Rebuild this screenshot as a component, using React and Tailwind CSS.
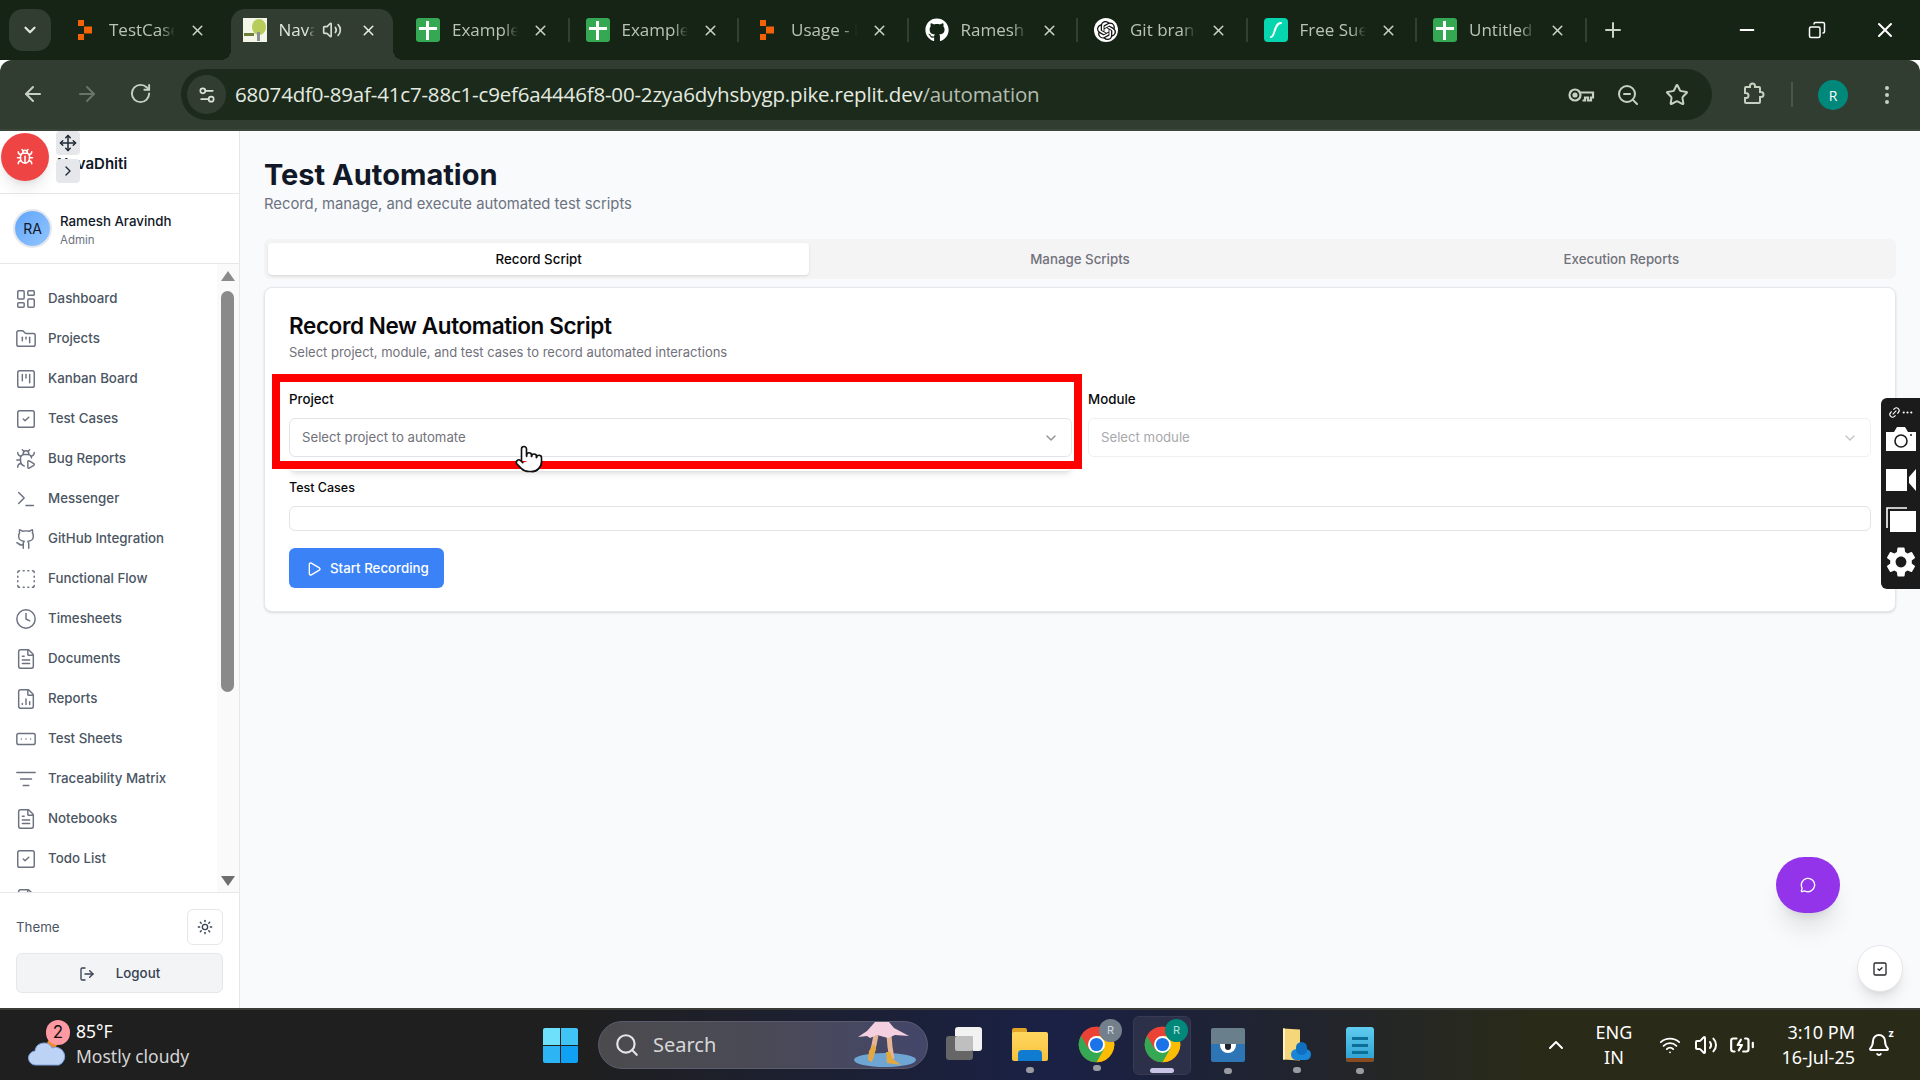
import React from "react";
import {
  ArrowLeft, ArrowRight, RotateCw, Settings2, ZoomOut, Star, EllipsisVertical, Minus, Copy, X, Plus,
  ChevronDown, ChevronRight, ChevronUp, Move, Bug, LayoutDashboard, FolderKanban, SquareKanban, SquareCheck, BugPlay,
  Terminal, Github, SquareDashed, Clock, FileText, FileChartColumn, RectangleEllipsis, ListFilter, Sun, LogOut, Play,
  MessageCircle, Pointer, Volume2, Search, Wifi, BatteryCharging, Bell, Link2, Ellipsis,
} from "lucide-react";
import { FaGithub } from "react-icons/fa";
import { SiOpenai } from "react-icons/si";
import { MdSettings } from "react-icons/md";

const SheetIcon = () => (
  <div className="w-6 h-6 rounded-[3px] bg-[#34a853] relative shrink-0">
    <div className="absolute left-[10px] top-[3px] w-[3px] h-[19px] bg-white" />
    <div className="absolute left-[3px] top-[9px] w-[18px] h-[3px] bg-white" />
  </div>
);

const ReplitIcon = () => (
  <svg width="24" height="24" viewBox="0 0 24 24" className="shrink-0">
    <rect x="5" y="2" width="6" height="6" fill="#f26207" />
    <rect x="11" y="8.5" width="8" height="7" fill="#f26207" />
    <rect x="5" y="16" width="6" height="6" fill="#f26207" />
  </svg>
);

const NavaIcon = () => (
  <svg width="24" height="24" viewBox="0 0 24 24" className="shrink-0">
    <rect width="24" height="24" fill="#f4f6e8" />
    <ellipse cx="16" cy="9" rx="7" ry="8" fill="#b8cc5c" />
    <rect x="14" y="14" width="3" height="9" fill="#8a8f98" />
    <rect x="1" y="15" width="10" height="3" fill="#6d7d3a" />
  </svg>
);

const FreeIcon = () => (
  <svg width="24" height="24" viewBox="0 0 24 24" className="shrink-0">
    <rect width="24" height="24" rx="4" fill="#06d6b0" />
    <path d="M7 19c4 0 3-14 10-14" fill="none" stroke="#fff" strokeWidth="2" strokeLinecap="round" />
  </svg>
);

const tabs = [
  { title: "TestCases", icon: <ReplitIcon />, first: true },
  { title: "NavaDhiti", icon: <NavaIcon />, active: true },
  { title: "Example", icon: <SheetIcon /> },
  { title: "Example", icon: <SheetIcon /> },
  { title: "Usage - Replit", icon: <ReplitIcon /> },
  { title: "Ramesh", icon: <FaGithub size={24} color="#fff" className="shrink-0" /> },
  { title: "Git branch", icon: <div className="w-6 h-6 rounded-full bg-white flex items-center justify-center shrink-0"><SiOpenai size={19} color="#111" /></div> },
  { title: "Free Sue", icon: <FreeIcon /> },
  { title: "Untitled", icon: <SheetIcon /> },
];

const Tab = ({ tab, showDivider }) => (
  <div className="relative w-[169.5px] h-[51px] shrink-0 flex items-center">
    {tab.active && (
      <>
        <div className="absolute left-0 right-[7px] top-0 bottom-0 rounded-t-[14px] bg-[#303d30]" />
        <div className="absolute -left-[10px] bottom-0 w-[10px] h-[10px] bg-[radial-gradient(circle_at_0_0,transparent_10px,#303d30_10px)]" />
        <div className="absolute right-[-3px] bottom-0 w-[10px] h-[10px] bg-[radial-gradient(circle_at_100%_0,transparent_10px,#303d30_10px)]" />
      </>
    )}
    <div className={`relative flex items-center w-full pb-[9px] ${tab.active || tab.first ? "pl-[12px]" : "pl-[16px]"}`}>
      {tab.icon}
      <span className={`ml-[12px] overflow-hidden whitespace-nowrap text-[17px] [mask-image:linear-gradient(to_right,black_78%,transparent)] ${tab.active ? "w-[36px] text-[#dfe6db]" : "w-[66px] text-[#b9c4b5]"}`}>
        {tab.title}
      </span>
      {tab.active && <Volume2 size={20} className="ml-[7px] text-[#d5ddd1]" />}
      <X size={17} strokeWidth={2.2} className={`${tab.active ? "ml-[18px] text-[#e8ede5]" : "ml-[14px] text-[#c9d2c5]"}`} />
    </div>
    {showDivider && <div className="absolute right-0 top-[9px] w-[2px] h-[24px] bg-[#333f32]" />}
  </div>
);

const TabStrip = () => (
  <div className="h-[60px] bg-[#162416] flex items-start pt-[9px] pl-[9px] shrink-0">
    <div className="w-[42px] h-[42px] rounded-[14px] bg-[#303d30] flex items-center justify-center mr-[10px] shrink-0">
      <ChevronDown size={18} strokeWidth={3} className="text-[#e0e6dc]" />
    </div>
    {tabs.map((tab, i) => (
      <Tab key={i} tab={tab} showDivider={i > 1} />
    ))}
    <Plus size={24} className="ml-[14px] mt-[9px] text-[#c9d2c5] shrink-0" />
    <Minus size={22} className="ml-[111px] mt-[10px] text-white shrink-0" />
    <Copy size={18} className="ml-[50px] mt-[12px] text-white shrink-0 scale-x-[-1]" />
    <X size={24} className="ml-[47px] mt-[9px] text-white shrink-0" />
  </div>
);

const KeyIcon = () => (
  <svg width="28" height="24" viewBox="0 0 28 24" fill="none" stroke="currentColor" strokeWidth="2.2" className="text-[#c6d1c2] shrink-0">
    <circle cx="8" cy="12" r="5.5" />
    <circle cx="8" cy="12" r="1.5" fill="currentColor" />
    <path d="M13.5 9.5H26v5h-2v3h-3v-3h-3v3h-2.5" />
  </svg>
);

const ExtensionIcon = () => (
  <svg width="26" height="26" viewBox="0 0 26 26" fill="none" stroke="currentColor" strokeWidth="2" className="text-[#c6d1c2] shrink-0">
    <path d="M7 6h4V5a2.5 2.5 0 0 1 5 0v1h4a1 1 0 0 1 1 1v4h1a2.5 2.5 0 0 1 0 5h-1v5a1 1 0 0 1-1 1H7a1 1 0 0 1-1-1v-4h1a2.5 2.5 0 0 0 0-5H6V7a1 1 0 0 1 1-1z" />
  </svg>
);

const Toolbar = () => (
  <div className="h-[71px] bg-[#303d30] rounded-t-[12px] border-b-2 border-[#3b463a] flex items-start pt-[9px] shrink-0">
    <ArrowLeft size={24} className="ml-[21px] mt-[13px] text-[#c6d1c2]" />
    <ArrowRight size={24} className="ml-[30px] mt-[13px] text-[#697566]" />
    <RotateCw size={23} className="ml-[30px] mt-[13px] text-[#c6d1c2]" />
    <div className="ml-[29px] w-[1531px] h-[51px] rounded-full bg-[#1c2a1b] flex items-center pl-[6px]">
      <div className="w-[39px] h-[39px] rounded-full bg-[#303d30] flex items-center justify-center shrink-0">
        <Settings2 size={20} className="text-[#dbe3d7]" />
      </div>
      <span className="ml-[9px] w-[1332px] shrink-0 text-[20.5px] text-[#e4ebe0] whitespace-nowrap tracking-[-0.18px]">
        68074df0-89af-41c7-88c1-c9ef6a4446f8-00-2zya6dyhsbygp.pike.replit.dev<span className="text-[#b3bdaf]">/automation</span>
      </span>
      <KeyIcon />
      <ZoomOut size={24} className="ml-[21px] text-[#c6d1c2] shrink-0" />
      <Star size={24} className="ml-[25px] text-[#c6d1c2] shrink-0" />
    </div>
    <div className="ml-[27px] mt-[12px]"><ExtensionIcon /></div>
    <div className="ml-[26px] mt-[13px] w-[2px] h-[25px] bg-[#4a5648]" />
    <div className="ml-[25px] mt-[11px] w-[30px] h-[30px] rounded-full bg-[#00897b] flex items-center justify-center text-[14px] text-white">R</div>
    <EllipsisVertical size={24} className="ml-[27px] mt-[14px] text-[#c6d1c2]" />
  </div>
);

const navItems = [
  ["Dashboard", LayoutDashboard], ["Projects", FolderKanban], ["Kanban Board", SquareKanban], ["Test Cases", SquareCheck],
  ["Bug Reports", BugPlay], ["Messenger", Terminal], ["GitHub Integration", Github], ["Functional Flow", SquareDashed],
  ["Timesheets", Clock], ["Documents", FileText], ["Reports", FileChartColumn], ["Test Sheets", RectangleEllipsis],
  ["Traceability Matrix", ListFilter], ["Notebooks", FileText], ["Todo List", SquareCheck], ["Settings", FileText],
];

const Sidebar = () => (
  <aside className="w-[240px] h-full shrink-0 bg-white border-r border-[#e5e7eb] flex flex-col">
    <div className="h-[63px] shrink-0 border-b border-[#e5e7eb] flex items-center pl-[57px] pt-[4px] text-[15px] font-semibold text-[#111827]">
      NavaDhiti
    </div>
    <div className="h-[70px] shrink-0 border-b border-[#e5e7eb] flex items-center pl-[15px]">
      <div className="w-[35px] h-[35px] rounded-full bg-gradient-to-br from-[#60a5fa] to-[#93c5fd] ring-2 ring-[#e5e7eb] flex items-center justify-center text-[14px] text-[#111827]">RA</div>
      <div className="ml-[10px] pt-[2px]">
        <div className="text-[13.3px] leading-[20px] font-medium text-[#111827]">Ramesh Aravindh</div>
        <div className="text-[11.5px] leading-[16px] text-[#6b7280] mt-[1px]">Admin</div>
      </div>
    </div>
    <div className="flex-1 min-h-0 flex">
      <nav className="flex-1 overflow-hidden pt-[15px] pl-[15px]">
        {navItems.map(([label, Icon]) => (
          <div key={label} className="h-10 flex items-center text-[13.3px] font-medium text-[#4b5563]">
            <Icon size={22} strokeWidth={1.6} className="text-[#6b7280] shrink-0" />
            <span className="ml-[11px]">{label}</span>
          </div>
        ))}
      </nav>
      <div className="w-[22px] shrink-0 bg-[#fafafa] flex flex-col items-center pr-[1px]">
        <div className="mt-[7px] w-0 h-0 border-x-[7px] border-x-transparent border-b-[10px] border-b-[#8a8a8a]" />
        <div className="mt-[10px] w-[13px] h-[401px] rounded-full bg-[#8a8a8a]" />
        <div className="mt-auto mb-[6px] w-0 h-0 border-x-[7px] border-x-transparent border-t-[10px] border-t-[#6e6e6e]" />
      </div>
    </div>
    <div className="h-[116px] shrink-0 border-t border-[#e5e7eb] px-4 pt-4">
      <div className="flex items-center justify-between">
        <span className="text-[13.3px] pt-[1px] text-[#4b5563]">Theme</span>
        <div className="w-[36px] h-[36px] rounded-md border border-[#e5e7eb] flex items-center justify-center">
          <Sun size={16} className="text-[#374151]" />
        </div>
      </div>
      <div className="mt-[8px] h-[40px] rounded-md bg-[#f3f4f6] border border-[#e5e7eb] flex items-center justify-center pt-[1px] text-[13.3px] font-medium text-[#374151]">
        <LogOut size={16} className="mr-[21px] text-[#374151]" />
        Logout
      </div>
    </div>
  </aside>
);

const Field = ({ label, placeholder, disabled, children }) => (
  <div className="relative">
    <div className="text-[13.3px] leading-[20px] font-medium text-[#09090b]">{label}</div>
    <div className={`mt-[9px] h-[39px] rounded-md border bg-white flex items-center justify-between pl-[12px] pr-[12px] pt-[1px] text-[13.2px] ${disabled ? "border-[#f0f0f0] text-[#a8a8ad]" : "border-[#e4e4e7] text-[#71717a]"}`}>
      {placeholder}
      <ChevronDown size={16} className={disabled ? "text-[#c4c4c8]" : "text-[#8f8f96]"} />
    </div>
    {children}
  </div>
);

const Main = () => (
  <main className="flex-1 h-full bg-[#f9fafb] px-[24px] pt-[26px] min-w-0">
    <h1 className="text-[29px] leading-[36px] font-bold text-[#111827]">Test Automation</h1>
    <p className="text-[14.8px] leading-[20px] pt-[1px] -mb-[1px] text-[#6b7280]">Record, manage, and execute automated test scripts</p>
    <div className="mt-[26px] h-[40px] rounded-md bg-[#f4f4f5] grid grid-cols-3 items-center px-[4px] text-[13.3px] font-medium text-[#71717a]">
      <div className="h-[32px] rounded-[4px] bg-white shadow-sm text-[#09090b] flex items-center justify-center pt-[1px]">Record Script</div>
      <div className="text-center pt-[1px]">Manage Scripts</div>
      <div className="text-center pt-[1px]">Execution Reports</div>
    </div>
    <section className="mt-[8px] h-[325px] rounded-lg border border-[#e5e7eb] bg-white shadow-sm px-[24px] pt-[22px]">
      <h2 className="text-[22.5px] leading-[32px] font-semibold tracking-[-0.4px] text-[#09090b]">Record New Automation Script</h2>
      <p className="text-[13px] leading-[20px] text-[#71717a]">Select project, module, and test cases to record automated interactions</p>
      <div className="mt-[27px] grid grid-cols-2 gap-[16px]">
        <Field label="Project" placeholder="Select project to automate">
          <div className="absolute left-0 right-0 top-[73px] h-[9px] rounded-b-md bg-white shadow-md" />
          <div className="absolute -left-[17px] -top-[15px] w-[810px] h-[95px] border-[8px] border-[#ff0000]" />
        </Field>
        <Field label="Module" placeholder="Select module" disabled />
      </div>
      <div className="mt-[21px] -mb-[1px] text-[12.5px] leading-[20px] font-medium text-[#09090b]">Test Cases</div>
      <div className="mt-[9px] h-[25px] rounded-md border border-[#e4e4e7] bg-white" />
      <div className="mt-[17px] w-[155px] h-[40px] rounded-md bg-[#3b82f6] flex items-center pl-[17px] pt-[1px] text-[13.3px] font-medium text-white">
        <Play size={16} className="mr-[8px]" />
        Start Recording
      </div>
    </section>
  </main>
);

const ChromeLogo = ({ badge }) => (
  <div className="relative w-[44px] h-[48px] shrink-0">
    <svg width="37" height="37" viewBox="0 0 48 48" className="absolute left-0 top-[5px]">
      <circle cx="24" cy="24" r="23" fill="#ea4335" />
      <path d="M24 47a23 23 0 0 0 20-34.5H24z" fill="#fbbc04" />
      <path d="M4 12.5A23 23 0 0 0 24 47l10-17.5H24z" fill="#34a853" />
      <path d="M24 1A23 23 0 0 0 4 12.5L14 30l10-17.5h20A23 23 0 0 0 24 1z" fill="#ea4335" />
      <circle cx="24" cy="24" r="11" fill="#fff" />
      <circle cx="24" cy="24" r="8.5" fill="#1a73e8" />
    </svg>
    <div className={`absolute left-[21px] -top-[2px] w-[23px] h-[23px] rounded-full flex items-center justify-center text-[11px] ${badge}`}>R</div>
  </div>
);

const RunDot = () => (
  <div className="absolute left-1/2 -translate-x-1/2 bottom-[-12px] w-[8px] h-[6px] rounded-full bg-[#9a9aa2]" />
);

const Taskbar = () => (
  <footer className="h-[72px] shrink-0 border-t-2 border-[#3a3a36] bg-[linear-gradient(to_right,#1f1f1f_0%,#1f1f1f_30%,#1a2145_55%,#1d2238_62%,#2a2a18_80%,#2a2a18_100%)] flex items-center text-white">
    <div className="relative w-[38px] h-[30px] ml-[28px] mt-[18px] shrink-0">
      <svg width="38" height="28" viewBox="0 0 38 28">
        <circle cx="24" cy="5" r="5" fill="#f08a24" />
        <path d="M8 26a7 7 0 0 1-1-14 9 9 0 0 1 17-3 8 8 0 0 1 7 17z" fill="#bcd3f5" stroke="#7ea3e0" strokeWidth="1" />
      </svg>
      <div className="absolute left-[18px] -top-[19px] w-[24px] h-[25px] rounded-full bg-[#ff9aa2] text-[#111] text-[17px] flex items-center justify-center">2</div>
    </div>
    <div className="ml-[10px] w-[120px] shrink-0 mt-[-2px] font-['Noto_Sans',sans-serif] text-[17.5px] leading-[25px]">
      <div className="text-white">85°F</div>
      <div className="text-[#d5d5d5] whitespace-nowrap">Mostly cloudy</div>
    </div>
    <div className="ml-[347px] w-[35px] h-[35px] shrink-0 grid grid-cols-2 gap-[1px] mt-[1px]">
      <div className="bg-[#6fe0fb] rounded-tl-[2px]" />
      <div className="bg-[#3fc4f5] rounded-tr-[2px]" />
      <div className="bg-[#2cb4f4] rounded-bl-[2px]" />
      <div className="bg-[#10a1f5] rounded-br-[2px]" />
    </div>
    <div className="ml-[20px] w-[330px] h-[48px] rounded-full bg-[linear-gradient(to_right,#4b4b4e,#4a4a56_50%,#44466a)] border border-[#5a5b6c] flex items-center pl-[15px] shrink-0 relative">
      <Search size={26} className="text-[#e5e5e5]" />
      <span className="ml-[13px] text-[20px] text-[#d8d8d8] font-['Noto_Sans',sans-serif]">Search</span>
      <svg width="64" height="46" viewBox="0 0 64 46" className="absolute right-[10px] top-0">
        <ellipse cx="32" cy="38" rx="31" ry="7" fill="#6fa5d2" />
        <path d="M23 13l-2 10-3 12M36 13l1 12 2 12" stroke="#e6b596" strokeWidth="5" fill="none" />
        <path d="M21 22l-5 7-1 9 4 2 4-13zM33 30l1 11 14 2-8-6-3-7z" fill="#e3a93f" />
        <path d="M22 0h14l5 6 15 8-14-1-7 3-11-3-7 3-3-2-9 1 9-6z" fill="#f3cfe0" />
      </svg>
    </div>
    <div className="ml-[18px] w-[36px] h-[33px] relative shrink-0 mt-[-3px]">
      <div className="absolute right-0 top-0 w-[27px] h-[24px] rounded-[3px] bg-[#f2f2f2]" />
      <div className="absolute left-0 bottom-0 w-[27px] h-[24px] rounded-[3px] bg-[#666666]" />
      <div className="absolute left-[9px] top-[9px] w-[18px] h-[15px] rounded-[2px] bg-[#bfbfbf]" />
    </div>
    <div className="ml-[30px] w-[36px] h-[33px] relative shrink-0 mt-[-1px]">
      <div className="absolute left-0 top-0 w-[15px] h-[8px] rounded-t-[2px] bg-[#e0a526]" />
      <div className="absolute left-0 top-[4px] w-[36px] h-[29px] rounded-[2px] bg-gradient-to-b from-[#ffd75e] to-[#f7c23c]" />
      <div className="absolute left-[6px] top-[22px] w-[24px] h-[11px] rounded-t-[4px] bg-[#0f7bd1]" />
      <RunDot />
    </div>
    <div className="ml-[30px] shrink-0 relative">
      <ChromeLogo badge="bg-[#73808c] text-[#cfd6dc]" />
      <div className="absolute left-[15px] bottom-[-2px] w-[8px] h-[6px] rounded-full bg-[#9a9aa2]" />
    </div>
    <div className="ml-[11px] w-[58px] h-[59px] rounded-md bg-[#2c3048] border border-[#363a52] flex items-center justify-center pl-[8px] relative shrink-0">
      <ChromeLogo badge="bg-[#00897b] text-[#b8e0da]" />
      <div className="absolute left-[16px] bottom-[1px] w-[24px] h-[5px] rounded-full bg-[#c9c3e6]" />
    </div>
    <div className="ml-[20px] w-[34px] h-[34px] relative shrink-0 mt-[-1px]">
      <div className="absolute inset-0 rounded-[2px] overflow-hidden bg-gradient-to-b from-[#6a7f8c] from-47% to-[#2e75b6] to-47%">
        <div className="absolute left-[9px] top-[16px] w-[16px] h-[9px] rounded-b-full bg-white" />
        <div className="absolute left-[14px] top-[16px] w-[6px] h-[6px] rounded-b-full bg-[#1c2230]" />
      </div>
      <RunDot />
    </div>
    <div className="ml-[38px] w-[28px] h-[32px] relative shrink-0 mt-[-1px]">
      <div className="absolute left-0 top-0 w-[17px] h-[31px] bg-[#f5d67a] border-l-2 border-[#fff3c4] skew-y-[4deg]" />
      <div className="absolute left-[8px] top-[20px] w-[20px] h-[11px] rounded-[6px] bg-[#1a86d8]" />
      <div className="absolute left-[13px] top-[13px] w-[11px] h-[13px] rounded-full bg-[#0f6fc0]" />
      <RunDot />
    </div>
    <div className="ml-[35px] w-[28px] h-[35px] relative shrink-0 mt-[-1px]">
      <div className="absolute inset-0 rounded-[3px] bg-gradient-to-b from-[#5fcdf0] to-[#2a9fd0] overflow-hidden flex flex-col gap-[4px] pt-[10px] pl-[6px]">
        <div className="w-[16px] h-[3px] bg-[#0e6f96]" />
        <div className="w-[16px] h-[3px] bg-[#0e6f96]" />
        <div className="w-[16px] h-[3px] bg-[#0e6f96]" />
        <div className="absolute left-0 bottom-0 w-full h-[4px] bg-[#8a4a20]" />
      </div>
      <RunDot />
    </div>
    <ChevronUp size={24} className="ml-[170px] text-white shrink-0" />
    <div className="ml-[21px] w-[50px] text-center text-[18px] leading-[25px] font-['Noto_Sans',sans-serif] shrink-0">
      <div>ENG</div>
      <div>IN</div>
    </div>
    <Wifi size={22} className="ml-[20px] text-white shrink-0" />
    <Volume2 size={24} className="ml-[13px] text-white shrink-0" />
    <BatteryCharging size={26} className="ml-[11px] text-white shrink-0" />
    <div className="ml-[20px] w-[80px] text-right text-[18px] leading-[25px] font-['Noto_Sans',sans-serif] whitespace-nowrap shrink-0">
      <div>3:10 PM</div>
      <div>16-Jul-25</div>
    </div>
    <div className="ml-[12px] relative shrink-0">
      <Bell size={24} className="text-white" />
      <span className="absolute -right-[3px] -top-[5px] text-[10px] font-bold leading-none">z</span>
    </div>
  </footer>
);

const Overlays = () => (
  <>
    {/* bug recorder widget */}
    <div className="absolute left-[1px] top-[133px] w-[48px] h-[48px] rounded-full bg-[#ef4444] shadow-lg flex items-center justify-center">
      <Bug size={18} className="text-white" />
    </div>
    <div className="absolute left-[56px] top-[131px] w-[24px] h-[24px] rounded bg-[#e5e7eb] flex items-center justify-center">
      <Move size={18} className="text-[#1f2937]" />
    </div>
    <div className="absolute left-[56px] top-[159px] w-[24px] h-[24px] rounded bg-[#e5e7eb] flex items-center justify-center">
      <ChevronRight size={16} className="text-[#1f2937]" />
    </div>
    {/* cursor */}
    <Pointer size={30} strokeWidth={1.3} fill="#fff" className="absolute left-[514px] top-[444px] text-[#111]" />
    {/* capture side panel */}
    <div className="absolute left-[1881px] top-[398px] w-[39px] h-[191px] rounded-l-[6px] bg-[#1b1b1b] flex flex-col items-center text-white">
      <div className="flex items-center mt-[7px] h-[14px]">
        <Link2 size={13} className="-rotate-45" />
        <Ellipsis size={13} />
      </div>
      <svg width="30" height="24" viewBox="0 0 30 24" className="mt-[8px] shrink-0">
        <path d="M0 5h8l3-5h8l3 5h8v19H0z" fill="#fff" />
        <circle cx="15" cy="14" r="6" fill="none" stroke="#1b1b1b" strokeWidth="1.6" />
        <circle cx="25" cy="8" r="1" fill="#1b1b1b" />
      </svg>
      <svg width="30" height="28" viewBox="0 0 30 28" className="mt-[15px] shrink-0">
        <path d="M0 3h21v22H0zM23 11l7-8v22l-7-8z" fill="#fff" />
      </svg>
      <svg width="30" height="25" viewBox="0 0 30 25" className="mt-[13px] shrink-0">
        <path d="M1 21V1h20" fill="none" stroke="#fff" strokeWidth="1.6" />
        <rect x="4" y="4" width="26" height="21" fill="#fff" />
      </svg>
      <MdSettings size={36} className="mt-[12px] shrink-0" />
    </div>
    {/* chat + todo */}
    <div className="absolute left-[1776px] top-[857px] w-[64px] h-[56px] rounded-full bg-[#9333ea] shadow-xl flex items-center justify-center">
      <MessageCircle size={16} className="text-white" />
    </div>
    <div className="absolute left-[1857px] top-[945px] w-[46px] h-[47px] rounded-full bg-white border border-[#e5e7eb] shadow-lg flex items-center justify-center">
      <SquareCheck size={16} className="text-[#27272a]" />
    </div>
  </>
);

export default function App() {
  return (
    <div className="relative w-[1920px] h-[1080px] overflow-hidden flex flex-col font-['Inter',sans-serif]">
      <div className="font-['Open_Sans',sans-serif]">
        <TabStrip />
        <Toolbar />
      </div>
      <div className="flex-1 min-h-0 flex">
        <Sidebar />
        <Main />
      </div>
      <Taskbar />
      <Overlays />
    </div>
  );
}
